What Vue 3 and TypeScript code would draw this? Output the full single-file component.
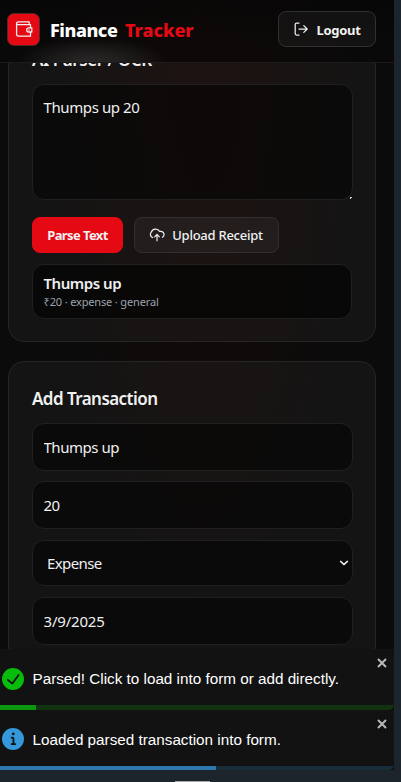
<script setup lang="ts">
import { ref } from 'vue'

interface Toast {
  kind: 'success' | 'info'
  message: string
  progress: number
}

const rawText = ref('Thumps up 20')
const title = ref('Thumps up')
const amount = ref('20')
const type = ref('expense')
const date = ref('3/9/2025')
const toasts = ref<Toast[]>([
  { kind: 'success', message: 'Parsed! Click to load into form or add directly.', progress: 9.2 },
  { kind: 'info', message: 'Loaded parsed transaction into form.', progress: 54.8 },
])

function dismiss(toast: Toast) {
  toasts.value = toasts.value.filter((t) => t !== toast)
}
</script>

<template>
  <div class="window">
    <div class="screen">
      <main class="content">
        <section class="card">
          <h2 class="wide">AI Parser / OCR</h2>
          <div class="area">
            <textarea v-model="rawText" class="field" spellcheck="false"></textarea>
            <svg class="grip" width="3" height="3" viewBox="0 0 3 3"><path d="M0 0h2v1H1v1H0z" fill="#ccc" /></svg>
          </div>
          <div class="actions">
            <button class="btn primary"><span>Parse Text</span></button>
            <button class="btn upload">
              <svg width="16" height="16" viewBox="0 0 24 24" class="line">
                <path d="M5.500 15.800A5 5 0 0 1 3.400 7.800A7 7 0 0 1 16 6.500H17.500a4.800 4.800 0 0 1 2.500 9M12 20.500v-9M8.500 14.700L12 11.200l3.500 3.500" />
              </svg>
              <span>Upload Receipt</span>
            </button>
          </div>
          <div class="result">
            <strong>Thumps up</strong>
            <small>₹20 · expense · general</small>
          </div>
        </section>

        <section class="card">
          <h2>Add Transaction</h2>
          <div class="form">
            <input v-model="title" class="field name" />
            <input v-model="amount" class="field" />
            <div class="choice">
              <select v-model="type" class="field">
                <option value="expense">Expense</option>
                <option value="income">Income</option>
              </select>
              <svg class="chevron" width="10" height="6" viewBox="0 0 10 6"><path d="M1.200 1L5 4.500L8.800 1" /></svg>
            </div>
            <input v-model="date" class="field date" />
          </div>
        </section>
      </main>

      <header class="topbar">
        <div class="logo">
          <svg width="20" height="20" viewBox="0 0 20 20">
            <path d="M16.500 8V5.700H4.300C3.200 5.700 2.600 5.200 2.600 4.300S3.300 2.800 4.300 2.800H15.200V5.500M2.600 4.300V15.500c0 1.100.7 1.700 1.800 1.700H16.500V13.500M17.800 8.800H14.800a2.100 2.100 0 0 0 0 4.200H17.800zM15 10.900h.2" />
          </svg>
        </div>
        <div class="brand"><span class="first">Finance</span><span class="second">Tracker</span></div>
        <button class="btn logout">
          <svg width="16" height="16" viewBox="0 0 16 16">
            <path d="M6 2H3.700Q2.200 2 2.200 3.500V12.500Q2.200 14 3.700 14H6M6 8H14M10.800 4.600L14.200 8L10.800 11.400" />
          </svg>
          <span>Logout</span>
        </button>
      </header>

      <div class="toasts">
        <div v-for="toast in toasts" :key="toast.kind" class="toast" :class="toast.kind">
          <svg class="badge" width="22" height="22" viewBox="0 0 24 24">
            <path v-if="toast.kind === 'success'" d="M12 0a12 12 0 1 0 12 12A12.014 12.014 0 0 0 12 0zm6.927 8.200l-6.845 9.289a1.011 1.011 0 0 1-1.430.188l-4.888-3.908a1 1 0 1 1 1.250-1.562l4.076 3.261 6.227-8.451a1 1 0 1 1 1.610 1.183z" />
            <path v-else d="M12 0a12 12 0 1 0 12 12A12.013 12.013 0 0 0 12 0zm.25 5a1.500 1.500 0 1 1-1.500 1.500 1.500 1.500 0 0 1 1.500-1.500zm2.250 13.500h-4a1 1 0 0 1 0-2h.75a.25.25 0 0 0 .25-.25v-4.500a.25.25 0 0 0-.25-.25h-.75a1 1 0 0 1 0-2h1a2 2 0 0 1 2 2v4.750a.25.25 0 0 0 .25.25h.75a1 1 0 1 1 0 2z" />
          </svg>
          <span class="message">{{ toast.message }}</span>
          <button class="close" @click="dismiss(toast)">
            <svg width="10" height="10" viewBox="0 0 10 10"><path d="M1 1L9 9M9 1L1 9" /></svg>
          </button>
          <div class="track"><div class="bar" :style="{ width: toast.progress + '%' }"></div></div>
        </div>
      </div>
    </div>
    <div class="handle"></div>
  </div>
</template>

<style>
body {
  background: #1c252b;
  overflow: hidden;
}
</style>

<style scoped>
* {
  box-sizing: border-box;
}
.window {
  width: 401px;
  height: 782px;
  overflow: hidden;
  background: #1c252b;
  font-family: 'Noto Sans', 'Open Sans', sans-serif;
  color: #f0f0f0;
}
.screen {
  position: relative;
  width: 394px;
  height: 770px;
  overflow: hidden;
  background: radial-gradient(ellipse 165px 650px at 205px 40px, #150a09 0%, #0f0b0a 55%, #0b0b0b 100%);
}
.content {
  display: flex;
  flex-direction: column;
  gap: 19px;
  padding: 22px 18px 0 8px;
}
.card {
  height: 320px;
  flex: none;
  padding: 23px;
  border: 1px solid #252525;
  border-radius: 16px;
  background: rgba(255, 255, 255, 0.038);
}
h2 {
  margin: 0;
  height: 38px;
  line-height: 28px;
  font-size: 17px;
  font-weight: 600;
  letter-spacing: -0.55px;
  white-space: nowrap;
}
h2.wide {
  line-height: 28px;
  letter-spacing: -0.45px;
}
.area {
  position: relative;
  height: 116px;
}
.grip {
  position: absolute;
  right: -1px;
  bottom: 0;
}
.field {
  display: block;
  width: 321px;
  margin: 0;
  border: 1px solid #202020;
  border-radius: 12px;
  outline: 0;
  background: rgba(0, 0, 0, 0.5);
  color: #f0f0f0;
  font: 400 15px 'Noto Sans', 'Open Sans', sans-serif;
  letter-spacing: -0.47px;
}
textarea.field {
  height: 116px;
  padding: 11px 10.500px;
  line-height: 23px;
  letter-spacing: -0.4px;
  resize: none;
}
.actions {
  display: flex;
  gap: 11px;
  margin-top: 17px;
}
.btn {
  display: flex;
  align-items: center;
  justify-content: center;
  height: 36px;
  padding: 0;
  border: 1px solid #303030;
  border-radius: 8px;
  background: rgba(255, 255, 255, 0.045);
  color: #f0f0f0;
  font: 500 13px 'Noto Sans', 'Open Sans', sans-serif;
  white-space: nowrap;
}
.btn svg,
.logo svg {
  fill: none;
  stroke: #f0f0f0;
  stroke-width: 1.25;
  stroke-linecap: round;
  stroke-linejoin: round;
}
.btn .line {
  stroke-width: 1.8;
}
.primary {
  width: 91px;
  border-color: #e50914;
  background: #e50914;
  font-weight: 700;
  letter-spacing: -0.6px;
}
.upload {
  width: 145px;
  gap: 7px;
  padding-right: 1px;
  letter-spacing: -0.26px;
}
.result {
  display: flex;
  flex-direction: column;
  height: 55px;
  margin-top: 11px;
  padding: 8px 10.500px;
  border: 1px solid #202020;
  border-radius: 12px;
  background: rgba(0, 0, 0, 0.6);
}
.result strong {
  font-size: 15px;
  font-weight: 600;
  line-height: 20px;
  letter-spacing: -0.45px;
}
.result small {
  color: #9ca3af;
  font-size: 11px;
  line-height: 17px;
  letter-spacing: -0.15px;
}
.form {
  display: flex;
  flex-direction: column;
}
.form input {
  height: 48px;
  margin-bottom: 10px;
  padding: 0 10.500px;
}
.form .date {
  letter-spacing: -0.2px;
}
.choice {
  position: relative;
  margin: 1px 0 11px;
}
select.field {
  height: 46px;
  padding: 0 14px;
  appearance: none;
  letter-spacing: -0.6px;
}
.chevron {
  position: absolute;
  right: 3px;
  top: 20px;
  fill: none;
  stroke: #fff;
  stroke-width: 1.6;
}
.topbar {
  position: absolute;
  inset: 0 0 auto;
  display: flex;
  align-items: center;
  height: 63px;
  padding: 0 18px 4px 7px;
  border-bottom: 1px solid #1c1a1a;
  background:
    radial-gradient(ellipse 76px 24px at 92px 62px, rgba(255, 255, 255, 0.13), rgba(255, 255, 255, 0.07) 50%, transparent),
    linear-gradient(rgba(5, 5, 5, 0.55), transparent 75%),
    linear-gradient(90deg, #090909, #0e0908 50%, #090909);
}
.logo {
  display: flex;
  align-items: center;
  justify-content: center;
  width: 33px;
  height: 33px;
  border: 1px solid #54262a;
  border-radius: 7px;
  background: #e50914;
}
.logo svg {
  stroke-width: 1.3;
}
.brand {
  display: flex;
  gap: 8px;
  margin: 2px 0 0 10px;
  font-size: 18px;
  font-weight: 800;
  line-height: 26px;
}
.first {
  width: 67px;
  color: #fff;
  letter-spacing: -0.45px;
}
.second {
  color: #e50914;
  letter-spacing: 0;
}
.logout {
  width: 98px;
  margin-left: auto;
  gap: 7px;
  font-weight: 700;
  letter-spacing: -0.3px;
}
.logout span {
  margin-top: 2px;
}
.toasts {
  position: absolute;
  inset: auto 0 0;
}
.toast {
  position: relative;
  display: flex;
  align-items: center;
  height: 61px;
  padding: 0 2px 2px;
  overflow: hidden;
  border-radius: 0 0 5px 0;
  background: #121212;
  color: #fff;
  font: 15.250px 'Liberation Sans', Arial, sans-serif;
}
.success {
  --accent: #07bc0c;
  --bar: #0b960f;
  --track: #12330f;
}
.info {
  height: 60px;
  --accent: #3498db;
  --bar: #2d78ad;
  --track: #192d3b;
}
.badge {
  fill: var(--accent);
}
.message {
  margin-left: 8.500px;
  white-space: nowrap;
}
.close {
  position: absolute;
  top: 9px;
  right: 7px;
  width: 10px;
  height: 10px;
  padding: 0;
  border: 0;
  background: none;
}
.close svg {
  display: block;
  stroke: #b8b8b8;
  stroke-width: 2;
}
.track {
  position: absolute;
  inset: auto 0 0;
  height: 5px;
  background: var(--track);
}
.info .track {
  height: 4px;
}
.bar {
  height: 100%;
  background: var(--bar);
}
.handle {
  width: 35px;
  height: 2px;
  margin: 11px 0 0 175px;
  background: #aaa5aa;
}
</style>
